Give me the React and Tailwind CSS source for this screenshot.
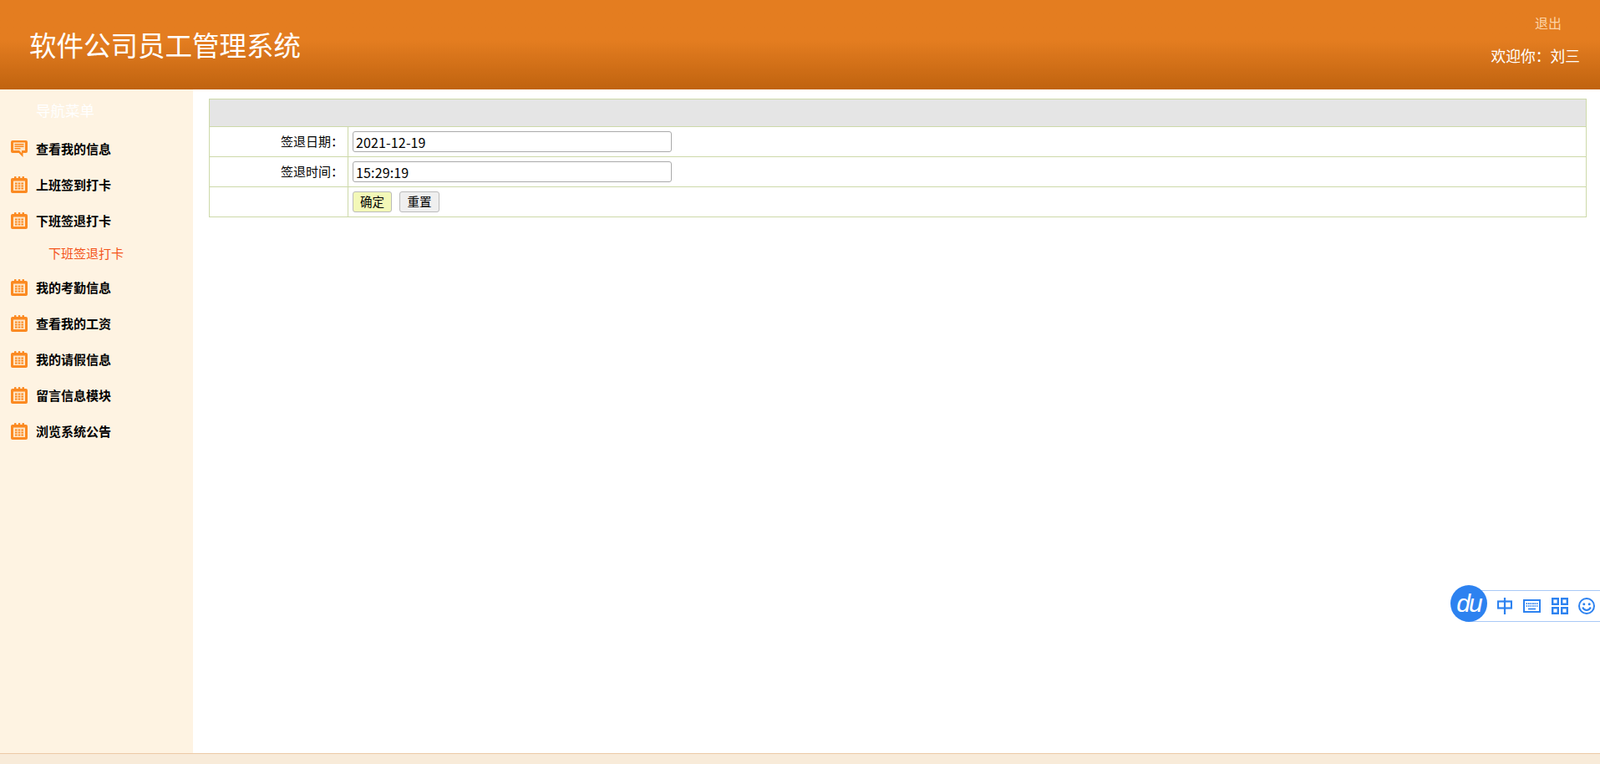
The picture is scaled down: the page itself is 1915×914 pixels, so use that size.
import React from 'react';

const CJK = 'font-["Noto_Sans_CJK_SC","Noto_Sans",sans-serif]';

const ChatIcon = () => (
  <svg width="20" height="20" viewBox="0 0 20 20" className="shrink-0">
    <path d="M2 0h16a2 2 0 0 1 2 2v11a2 2 0 0 1-2 2h-3.500v5l-5-5H2a2 2 0 0 1-2-2V2a2 2 0 0 1 2-2z" fill="#fb8a22" />
    <path d="M3 2.500h14v9.500h-4v3l-3-3H3z" fill="#fee6c8" />
    <path d="M4.500 4.800h11M4.500 7.300h11M4.500 9.800h7" stroke="#fb8a22" strokeWidth="1.400" />
  </svg>
);

const CalendarIcon = () => (
  <svg width="20" height="20" viewBox="0 0 20 20" className="shrink-0">
    <rect x="0" y="2" width="20" height="18" rx="2" fill="#fb8a22" />
    <rect x="3" y="5.500" width="14" height="11.500" fill="#fee6c8" />
    <rect x="4" y="0" width="2.500" height="3.500" rx="0.800" fill="#fb8a22" />
    <rect x="8.800" y="0" width="2.500" height="3.500" rx="0.800" fill="#fb8a22" />
    <rect x="13.500" y="0" width="2.500" height="3.500" rx="0.800" fill="#fb8a22" />
    {[7.500, 10.500, 13.500].map((y) =>
      [5, 8.700, 12.400].map((x) => <rect key={`${x}-${y}`} x={x} y={y} width="2.600" height="2" fill="#fb8a22" />)
    )}
  </svg>
);

const MenuItem = ({ label, chat }) => (
  <div className="h-[43px] flex items-center pl-[13px] gap-[10px]">
    {chat ? <ChatIcon /> : <CalendarIcon />}
    <span className="text-[15px] font-bold text-black leading-none">{label}</span>
  </div>
);

const ImeBar = () => (
  <div className="absolute left-[1736px] top-[700px] w-[179px] h-[46px] flex items-center">
    <div className="absolute left-[18px] top-[6px] right-0 h-[38px] bg-white border-y border-[#a9c9f7]" />
    <div className="absolute left-0 top-0 w-[44px] h-[44px] rounded-full bg-[#2d82f0] flex items-center justify-center z-10">
      <span className='text-white text-[30px] italic leading-none tracking-[-2px] font-["Liberation_Sans",sans-serif]'>du</span>
    </div>
    <div className="relative flex items-center ml-[56px] mt-[4px] gap-[13px] text-[#2d82f0]">
      <svg width="18" height="20" viewBox="0 0 18 20" fill="none" aria-label="中">
        <rect x="1" y="4.500" width="16" height="8" stroke="currentColor" strokeWidth="2.200" />
        <path d="M9 0v20" stroke="currentColor" strokeWidth="2.200" />
      </svg>
      <svg width="21" height="16" viewBox="0 0 21 16" fill="none">
        <rect x="1" y="1" width="19" height="14" stroke="currentColor" strokeWidth="2" />
        <path d="M3.500 5.200h14M3.500 8h14" stroke="currentColor" strokeWidth="1.700" strokeDasharray="1.700 0.800" />
        <path d="M6 11.500h9" stroke="currentColor" strokeWidth="1.700" />
      </svg>
      <svg width="20" height="20" viewBox="0 0 20 20" fill="none">
        <rect x="1.200" y="1.200" width="6.600" height="6.600" stroke="currentColor" strokeWidth="2.400" />
        <rect x="12.200" y="1.200" width="6.600" height="6.600" stroke="currentColor" strokeWidth="2.400" />
        <rect x="1.200" y="12.200" width="6.600" height="6.600" stroke="currentColor" strokeWidth="2.400" />
        <rect x="12.200" y="12.200" width="6.600" height="6.600" stroke="currentColor" strokeWidth="2.400" />
      </svg>
      <svg width="20" height="20" viewBox="0 0 20 20" fill="none" className="-ml-[1px]">
        <circle cx="10" cy="10" r="9" stroke="currentColor" strokeWidth="2" />
        <circle cx="6.800" cy="7.800" r="1.500" fill="currentColor" />
        <circle cx="13.200" cy="7.800" r="1.500" fill="currentColor" />
        <path d="M5.200 11.500c1 2.300 2.800 3.500 4.800 3.500s3.800-1.200 4.800-3.500" stroke="currentColor" strokeWidth="2" />
      </svg>
    </div>
  </div>
);

const App = () => {
  return (
    <div className={`relative h-[914px] overflow-hidden flex flex-col bg-white ${CJK}`}>
      {/* Header */}
      <header className="h-[107px] shrink-0 flex justify-between bg-gradient-to-b from-[#e47d20] from-45% to-[#c0630f] text-white">
        <h1 className="pl-[35px] pt-[30px] text-[32.500px] font-normal leading-[46px]">软件公司员工管理系统</h1>
        <div className="flex flex-col items-end pr-[24px]">
          <a className="mt-[15px] mr-[22px] text-[16px] leading-[24px] text-[#fcd3a6]">退出</a>
          <span className="mt-[14px] text-[17.750px] leading-[26px]">欢迎你：刘三</span>
        </div>
      </header>

      <div className="flex-1 flex min-h-0">
        {/* Sidebar */}
        <aside className="w-[231px] shrink-0 bg-[#fef3e2]">
          <div className="pl-[43px] pt-[13px] h-[49px] text-[17.500px] leading-[24px] text-white">导航菜单</div>
          <MenuItem label="查看我的信息" chat />
          <MenuItem label="上班签到打卡" />
          <MenuItem label="下班签退打卡" />
          <div className="h-[37px] pl-[58px] flex items-center text-[15px] text-[#f4541a]">下班签退打卡</div>
          <MenuItem label="我的考勤信息" />
          <MenuItem label="查看我的工资" />
          <MenuItem label="我的请假信息" />
          <MenuItem label="留言信息模块" />
          <MenuItem label="浏览系统公告" />
        </aside>

        {/* Main */}
        <main className="flex-1 pl-[19px] pr-[16px] pt-[11px]">
          <table className="w-full table-fixed border-collapse text-[15px] text-black">
            <colgroup>
              <col className="w-[166px]" />
              <col />
            </colgroup>
            <tbody>
              <tr className="h-[33px] bg-[#e5e5e5]">
                <td colSpan="2" className="border border-[#cdd9a9]" />
              </tr>
              <tr className="h-[36px]">
                <td className="border border-[#cdd9a9] text-right pr-[5px]">签退日期：</td>
                <td className="border border-[#cdd9a9] pl-[5px]">
                  <input readOnly value="2021-12-19" className="block w-[382px] h-[25px] px-[3px] border border-[#aaa] rounded-[3px] text-[16px] tracking-[0.15px] bg-white" />
                </td>
              </tr>
              <tr className="h-[36px]">
                <td className="border border-[#cdd9a9] text-right pr-[5px]">签退时间：</td>
                <td className="border border-[#cdd9a9] pl-[5px]">
                  <input readOnly value="15:29:19" className="block w-[382px] h-[25px] px-[3px] border border-[#aaa] rounded-[3px] text-[16px] tracking-[0.15px] bg-white" />
                </td>
              </tr>
              <tr className="h-[36px]">
                <td className="border border-[#cdd9a9]" />
                <td className="border border-[#cdd9a9] pl-[5px]">
                  <div className="flex gap-[9px]">
                    <button className="w-[47px] h-[25px] text-[14.500px] leading-none border border-[#bbb] rounded-[3px] bg-[#f3f8b8]">确定</button>
                    <button className="w-[48px] h-[25px] text-[14.500px] leading-none border border-[#bbb] rounded-[3px] bg-[#efefef]">重置</button>
                  </div>
                </td>
              </tr>
            </tbody>
          </table>
        </main>
      </div>

      {/* Footer */}
      <footer className="h-[13px] shrink-0 bg-[#f8ebd9] border-t border-[#eccaa6]" />

      <ImeBar />
    </div>
  );
};

export default App;
